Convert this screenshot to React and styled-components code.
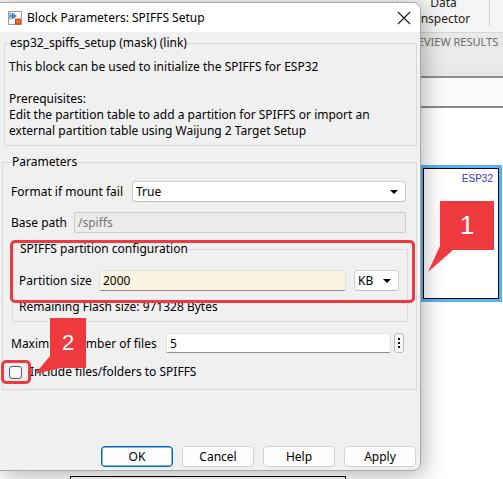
import React from "react";
import styled, { createGlobalStyle } from "styled-components";

const GlobalStyle = createGlobalStyle`
  html, body { margin: 0; padding: 0; }
  body {
    font-family: "Segoe UI", "Noto Sans", "Open Sans", sans-serif;
    font-size: 12px;
    color: #000;
  }
  * { box-sizing: border-box; }
`;

const Red = "#ee3a3e";

const Canvas = styled.div`
  position: relative;
  width: 503px;
  height: 479px;
  overflow: hidden;
  background: #fff;
`;

/* ---------- app behind the dialog ---------- */

const Backdrop = styled.div`
  display: flex;
  flex-direction: column;
  height: 100%;
`;

const Ribbon = styled.div`
  height: 32px;
  flex: none;
  background: #f5f5f5;
  display: flex;
  padding-left: 397px;
`;

const RibbonTab = styled.div`
  width: 93px;
  height: 31px;
  border-left: 1px solid #d2d2d2;
  border-right: 1px solid #d2d2d2;
  text-align: center;
  line-height: 16px;
  color: #222;
  padding-top: 0;
  margin-top: -5px;
`;

const ReviewBar = styled.div`
  height: 18px;
  flex: none;
  background: #e9e9e9;
  border-top: 1px solid #d6d6d6;
  padding-left: 411px;
  font-size: 11px;
  line-height: 17px;
  color: #6a6a6a;
  white-space: nowrap;
`;

const ShadeBand = styled.div`
  height: 28px;
  flex: none;
  background: linear-gradient(#eeeeee, #e7e7e7);
  border-bottom: 2px solid #8e8e8e;
`;

const WhiteStrip = styled.div`
  height: 30px;
  flex: none;
  background: #fbfbfb;
  border-bottom: 2px solid #8a8a8a;
`;

const Workspace = styled.div`
  flex: 1;
  background: #fff;
`;

const BlockNode = styled.div`
  position: absolute;
  left: 420px;
  top: 165px;
  width: 82px;
  height: 137px;
  border: 3px solid #57b1f6;
  background: #fff;
`;

const BlockInner = styled.div`
  height: 100%;
  border: 1px solid #000;
  text-align: right;
  padding: 4px 5px 0 0;
  font-family: "Liberation Sans", Arial, sans-serif;
  font-size: 10px;
  color: #3434d8;
`;

const LowerNode = styled.div`
  position: absolute;
  left: 70px;
  top: 476px;
  width: 276px;
  height: 20px;
  border: 1px solid #000;
  background: #fff;
`;

/* ---------- dialog window ---------- */

const Dialog = styled.div`
  position: absolute;
  left: -1px;
  top: 2px;
  width: 422px;
  height: 469px;
  border: 1px solid #a9a9a9;
  border-radius: 0 8px 8px 0;
  background: #f0f0f0;
  box-shadow: 3px 4px 22px rgba(0, 0, 0, 0.3);
  display: flex;
  flex-direction: column;
  overflow: hidden;
`;

const TitleBar = styled.div`
  height: 29px;
  flex: none;
  background: #fff;
  display: flex;
  align-items: center;
  padding-left: 7px;
  gap: 4px;
`;

const TitleText = styled.span`
  font-size: 12px;
  color: #000;
`;

const CloseButton = styled.div`
  margin-left: auto;
  margin-right: 9px;
  width: 14px;
  height: 14px;
  display: flex;
`;

const Body = styled.div`
  flex: 1;
  display: flex;
  flex-direction: column;
  padding: 3px 3px 3px 2px;
`;

const GroupBox = styled.fieldset`
  margin: ${(p) => p.$margin || "0"};
  padding: ${(p) => p.$padding || "0"};
  border: 1px solid #d9d9d9;
  min-width: 0;
`;

const Legend = styled.legend`
  padding: 0 1px;
  line-height: 16px;
`;

const Description = styled.div`
  margin-top: 8px;
  line-height: 16px;
  white-space: pre-line;
`;

const FieldRow = styled.div`
  display: flex;
  align-items: center;
  height: ${(p) => p.$h || 21}px;
  margin-top: ${(p) => p.$mt}px;
  gap: ${(p) => p.$gap || 0}px;
  padding-right: ${(p) => p.$pr || 0}px;
`;

const FieldLabel = styled.div`
  width: ${(p) => p.$w}px;
  flex: none;
  white-space: nowrap;
`;

const DropDown = styled.div`
  flex: ${(p) => (p.$w ? "none" : "1")};
  width: ${(p) => (p.$w ? `${p.$w}px` : "auto")};
  height: ${(p) => p.$h || 21}px;
  display: flex;
  align-items: center;
  padding: 0 7px 0 3px;
  background: #fff;
  border: 1px solid #cfcfcf;
  border-bottom-color: #b9b9b9;
  border-radius: 4px;
`;

const DropText = styled.span`
  flex: 1;
`;

const Caret = styled.span`
  width: 0;
  height: 0;
  border-left: 4px solid transparent;
  border-right: 4px solid transparent;
  border-top: 4px solid #000;
`;

const TextField = styled.div`
  flex: 1;
  height: ${(p) => p.$h || 21}px;
  display: flex;
  align-items: center;
  padding-left: 3px;
  background: ${(p) => p.$bg || "#fff"};
  color: ${(p) => (p.$disabled ? "#767676" : "#000")};
  border: 1px solid ${(p) => (p.$disabled ? "#cccccc" : "#e2e2e2")};
  border-bottom-color: ${(p) => (p.$disabled ? "#cccccc" : "#8f8f8f")};
  border-radius: 2px;
`;

const MoreButton = styled.div`
  width: 10px;
  height: 20px;
  flex: none;
  border: 1px solid #bdbdbd;
  border-radius: 3px;
  background: #f7f7f7;
  display: flex;
  flex-direction: column;
  align-items: center;
  justify-content: center;
  gap: 2px;
`;

const Dot = styled.span`
  width: 2px;
  height: 2px;
  background: #111;
`;

const InfoLine = styled.div`
  margin-top: 8px;
  line-height: 16px;
`;

const CheckRow = styled.label`
  display: flex;
  align-items: center;
  gap: 8px;
  margin: 11px 0 0 -2px;
  line-height: 16px;
`;

const CheckBox = styled.span`
  width: 13px;
  height: 13px;
  border: 1px solid #5c5c5c;
  border-radius: 3px;
  background: #f6f6f6;
`;

const ButtonRow = styled.div`
  margin-top: auto;
  display: flex;
  justify-content: flex-end;
  gap: 9px;
  padding-right: 1px;
`;

const DialogButton = styled.div`
  width: 72px;
  height: 21px;
  display: flex;
  align-items: center;
  justify-content: center;
  background: #fdfdfd;
  border: 1px solid ${(p) => (p.$primary ? "#0067c0" : "#d1d1d1")};
  box-shadow: ${(p) => (p.$primary ? "inset 0 0 0 0.5px #0067c0" : "none")};
  border-radius: 4px;
`;

/* ---------- annotations ---------- */

const Highlight = styled.div`
  position: absolute;
  left: ${(p) => p.$x}px;
  top: ${(p) => p.$y}px;
  width: ${(p) => p.$w}px;
  height: ${(p) => p.$h}px;
  border: 3px solid ${Red};
  border-radius: 5px;
`;

const Callout = styled.div`
  position: absolute;
  left: ${(p) => p.$x}px;
  top: ${(p) => p.$y}px;
  width: ${(p) => p.$w}px;
  height: ${(p) => p.$h}px;
  background: ${Red};
  color: #fff;
  display: flex;
  align-items: center;
  justify-content: center;
  font-family: "Liberation Sans", Arial, sans-serif;
  font-size: ${(p) => p.$fs}px;
`;

const TailLayer = styled.svg`
  position: absolute;
  left: 0;
  top: 0;
  pointer-events: none;
`;

function BlockIcon() {
  return (
    <svg width="16" height="16" viewBox="0 0 16 16">
      <path d="M1.5 1.5h13v13h-13z" fill="#fff" stroke="#9a9a9a" />
      <path d="M3 2.5v7M3 6h5.5" stroke="#1f6fc0" strokeWidth="1" fill="none" />
      <path d="M5 3l4.5 3L5 9z" fill="#3b8de0" stroke="#1f5fa8" strokeWidth="0.6" />
      <rect x="8.5" y="9" width="5" height="5" fill="#f06a1a" stroke="#b33a00" strokeWidth="0.8" />
    </svg>
  );
}

function CloseIcon() {
  return (
    <svg width="14" height="14" viewBox="0 0 14 14">
      <path d="M1 1L13 13M13 1L1 13" stroke="#1a1a1a" strokeWidth="1.1" />
    </svg>
  );
}

export default function App() {
  return (
    <Canvas>
      <GlobalStyle />
      <Backdrop>
        <Ribbon>
          <RibbonTab>
            Data
            <br />
            Inspector
          </RibbonTab>
        </Ribbon>
        <ReviewBar>REVIEW RESULTS</ReviewBar>
        <ShadeBand />
        <WhiteStrip />
        <Workspace />
      </Backdrop>

      <BlockNode>
        <BlockInner>ESP32</BlockInner>
      </BlockNode>
      <LowerNode />

      <Dialog>
        <TitleBar>
          <BlockIcon />
          <TitleText>Block Parameters: SPIFFS Setup</TitleText>
          <CloseButton>
            <CloseIcon />
          </CloseButton>
        </TitleBar>

        <Body>
          <GroupBox $margin="0 0 0 2px" $padding="0 4px 6px 4px">
            <Legend>esp32_spiffs_setup (mask) (link)</Legend>
            <Description>
              {"This block can be used to initialize the SPIFFS for ESP32\n\u00a0\nPrerequisites:\nEdit the partition table to add a partition for SPIFFS or import an\nexternal partition table using Waijung 2 Target Setup"}
            </Description>
          </GroupBox>

          <GroupBox $margin="8px 0 0 0" $padding="0 10px 9px 8px">
            <Legend>Parameters</Legend>

            <FieldRow $mt={11}>
              <FieldLabel $w={121}>Format if mount fail</FieldLabel>
              <DropDown>
                <DropText>True</DropText>
                <Caret />
              </DropDown>
            </FieldRow>

            <FieldRow $mt={10}>
              <FieldLabel $w={63}>Base path</FieldLabel>
              <TextField $disabled $bg="#ececec">/spiffs</TextField>
            </FieldRow>

            <GroupBox $margin="8px -2px 0 1px" $padding="0 8px 6px 6px">
              <Legend>SPIFFS partition configuration</Legend>
              <FieldRow $mt={13} $gap={8}>
                <FieldLabel $w={72}>Partition size</FieldLabel>
                <TextField $bg="#fdf3e2">2000</TextField>
                <DropDown $w={45}>
                  <DropText>KB</DropText>
                  <Caret />
                </DropDown>
              </FieldRow>
              <InfoLine>Remaining Flash size: 971328 Bytes</InfoLine>
            </GroupBox>

            <FieldRow $mt={11} $h={20} $gap={3} $pr={2}>
              <FieldLabel $w={152}>Maximum number of files</FieldLabel>
              <TextField $h={20}>5</TextField>
              <MoreButton>
                <Dot />
                <Dot />
                <Dot />
              </MoreButton>
            </FieldRow>

            <CheckRow>
              <CheckBox />
              Include files/folders to SPIFFS
            </CheckRow>
          </GroupBox>

          <ButtonRow>
            <DialogButton $primary>OK</DialogButton>
            <DialogButton>Cancel</DialogButton>
            <DialogButton>Help</DialogButton>
            <DialogButton>Apply</DialogButton>
          </ButtonRow>
        </Body>
      </Dialog>

      <Highlight $x={10} $y={240} $w={405} $h={63} />
      <Highlight $x={1} $y={360} $w={30} $h={24} />

      <TailLayer width="503" height="479">
        <polygon points="440,246 453,250 428,272" fill={Red} />
        <polygon points="50,356 61,368 35,374" fill={Red} />
      </TailLayer>
      <Callout $x={440} $y={201} $w={54} $h={49} $fs={26}>1</Callout>
      <Callout $x={50} $y={318} $w={36} $h={50} $fs={22}>2</Callout>
    </Canvas>
  );
}
